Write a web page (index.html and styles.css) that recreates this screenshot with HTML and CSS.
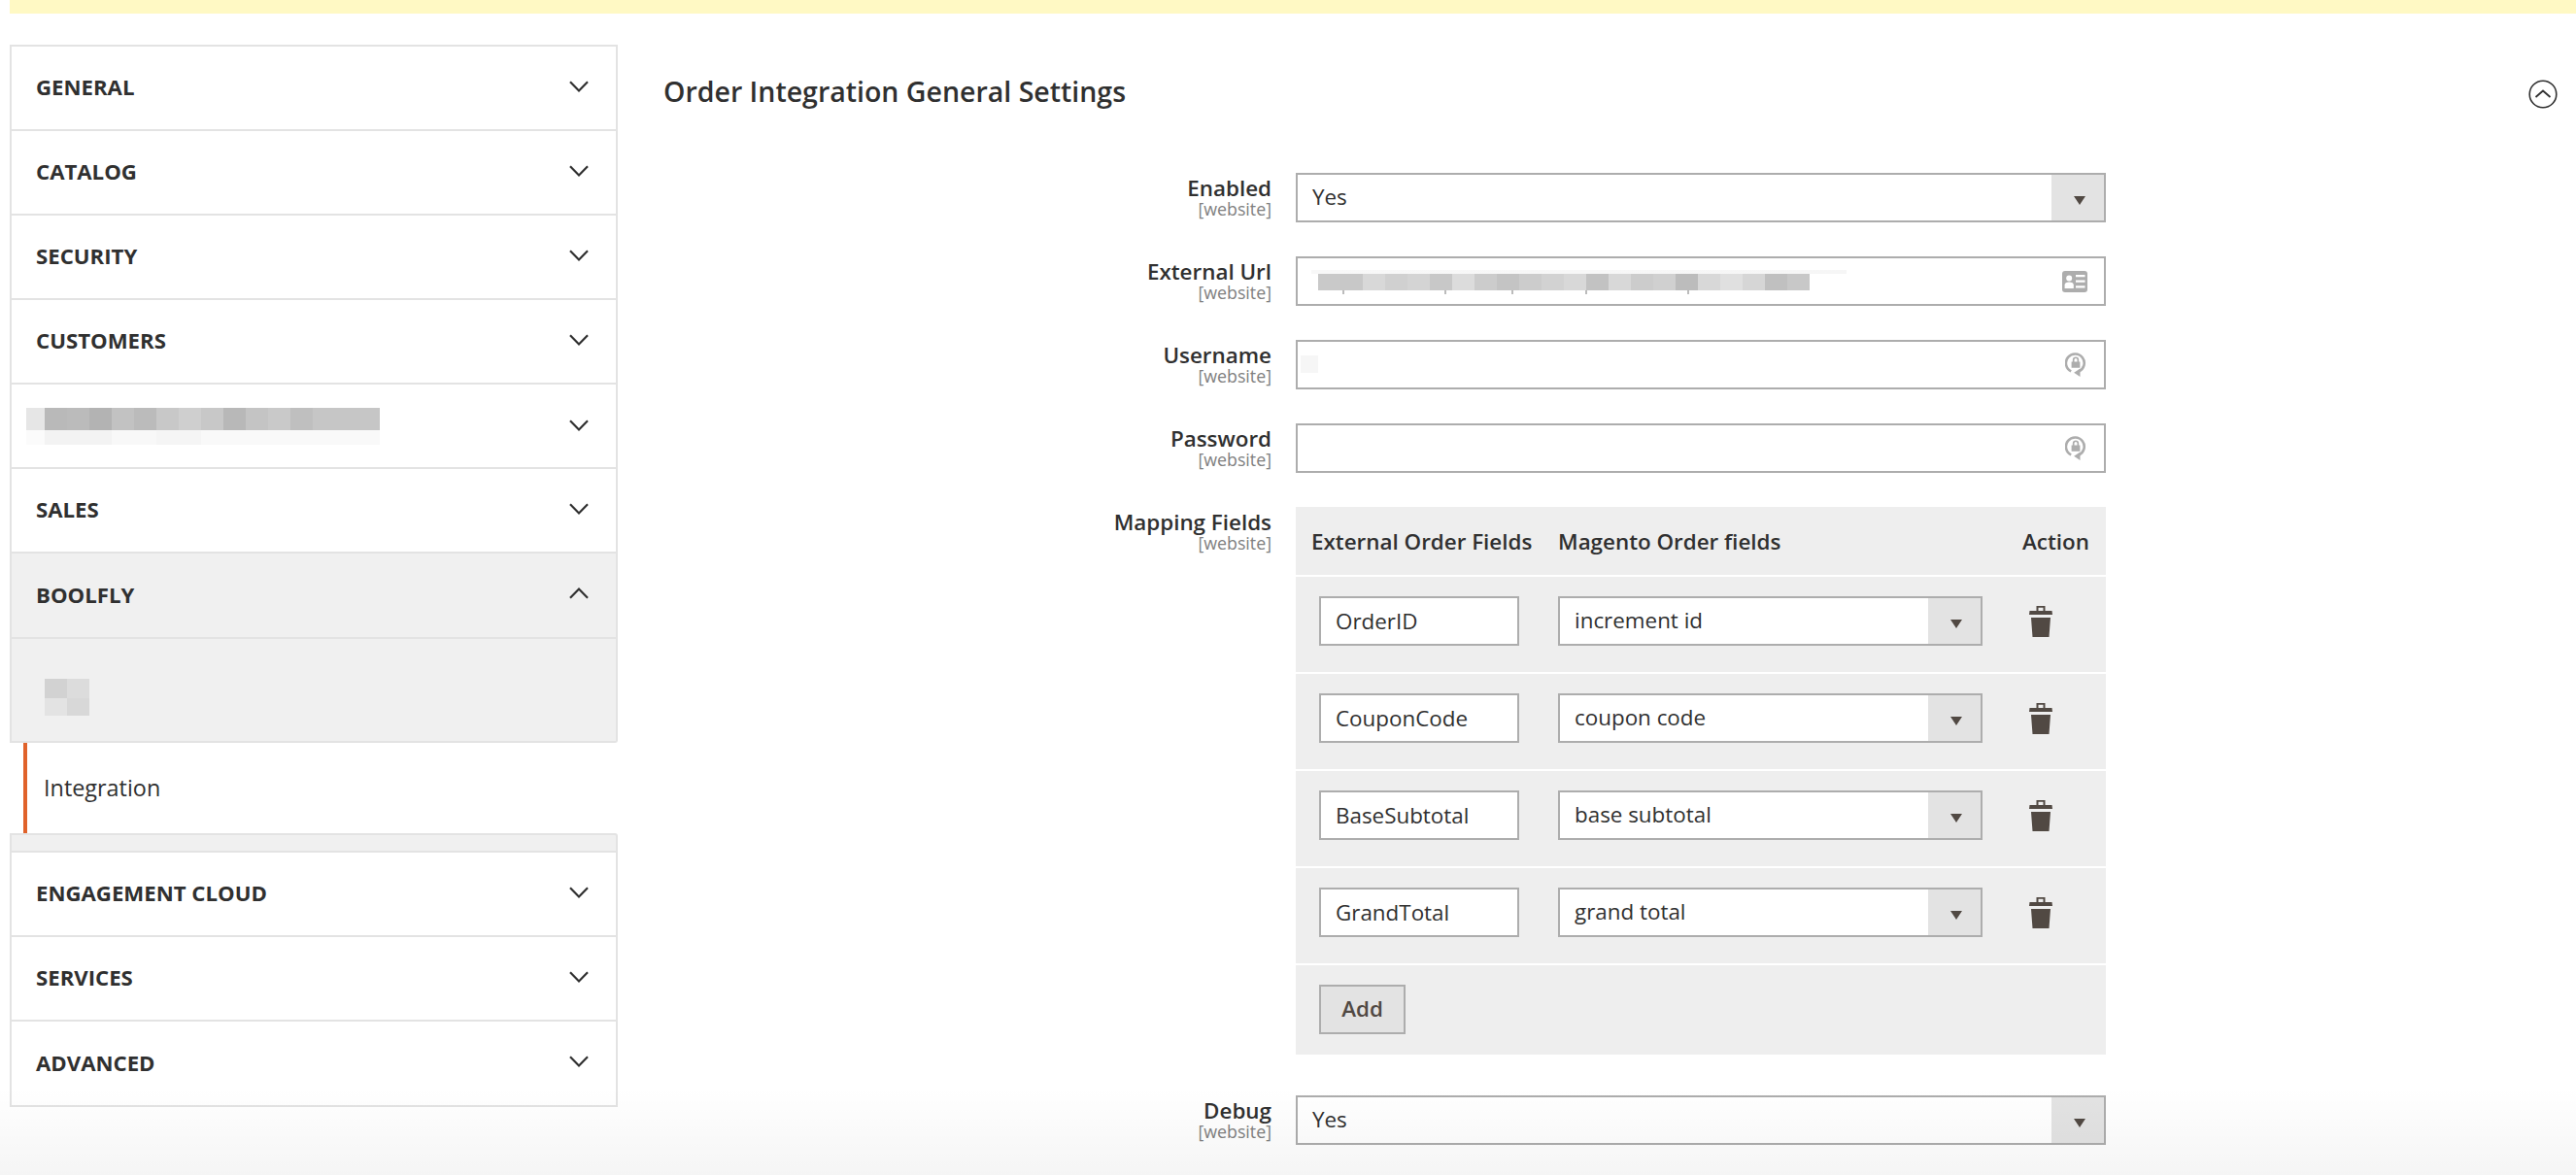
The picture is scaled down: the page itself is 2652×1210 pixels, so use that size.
FILE: index.html
```html
<!DOCTYPE html>
<html lang="en">
<head>
<meta charset="utf-8">
<title>Order Integration General Settings</title>
<link rel="stylesheet" href="styles.css">
</head>
<body>
<svg class="defs" width="0" height="0" aria-hidden="true">
  <symbol id="chev-down" viewBox="0 0 20 12"><path d="M1 1.2 10 10.4 19 1.2" fill="none" stroke="#303030" stroke-width="2.2"/></symbol>
  <symbol id="chev-up" viewBox="0 0 20 12"><path d="M1 10.8 10 1.6 19 10.8" fill="none" stroke="#303030" stroke-width="2.2"/></symbol>
  <symbol id="trash" viewBox="0 0 24 32"><path fill="#514943" fill-rule="evenodd" d="M7.5 0h9v5h7l.5 4H0l.5-4h7zM9.5 1.8V5h5V1.8zM2 12h20l-1.5 20h-17z"/></symbol>
  <symbol id="lock" viewBox="0 0 22 26">
    <path d="M14 19.6A9.4 9.4 0 1 0 6.2 19.4" fill="none" stroke="#adadad" stroke-width="2.6"/>
    <path fill="#adadad" d="M15.5 16.4v8.6l-6.4-4.3z"/>
    <path fill="#adadad" fill-rule="evenodd" d="M6.6 9.4h1.2V7.6a3.2 3.2 0 0 1 6.4 0v1.8h1.2v6.4H6.6zM9.5 9.4h3V7.6a1.5 1.5 0 0 0-3 0z"/>
  </symbol>
  <symbol id="card" viewBox="0 0 26 22">
    <rect width="26" height="22" rx="3" fill="#adadad"/>
    <circle cx="7.2" cy="7.4" r="3" fill="#fff"/>
    <path fill="#fff" d="M2.6 18v-3.4c0-2 1.6-3 4.6-3s4.6 1 4.6 3V18z"/>
    <path fill="#fff" d="M14 4h9.5v2.2H14zM14 9.6h9.5v2.2H14zM14 15.2h9.5v2.2H14z"/>
  </symbol>
</svg>

<div class="notice"></div>

<div class="page">
  <nav class="sidebar">
    <div class="sec"><span class="sec-title">GENERAL</span><svg class="chev"><use href="#chev-down"/></svg></div>
    <div class="sec"><span class="sec-title">CATALOG</span><svg class="chev"><use href="#chev-down"/></svg></div>
    <div class="sec"><span class="sec-title">SECURITY</span><svg class="chev"><use href="#chev-down"/></svg></div>
    <div class="sec"><span class="sec-title">CUSTOMERS</span><svg class="chev"><use href="#chev-down"/></svg></div>
    <div class="sec sec-redacted"><div class="blur-name"></div><svg class="chev"><use href="#chev-down"/></svg></div>
    <div class="sec"><span class="sec-title">SALES</span><svg class="chev"><use href="#chev-down"/></svg></div>
    <div class="sec sec-open"><span class="sec-title">BOOLFLY</span><svg class="chev"><use href="#chev-up"/></svg></div>
    <div class="sub-gray"><div class="blur-sub"></div></div>
    <div class="sub-active">Integration</div>
    <div class="sub-tail"></div>
    <div class="sec"><span class="sec-title">ENGAGEMENT CLOUD</span><svg class="chev"><use href="#chev-down"/></svg></div>
    <div class="sec"><span class="sec-title">SERVICES</span><svg class="chev"><use href="#chev-down"/></svg></div>
    <div class="sec sec-last"><span class="sec-title">ADVANCED</span><svg class="chev"><use href="#chev-down"/></svg></div>
  </nav>

  <main class="content">
    <header class="head">
      <h1 class="title">Order Integration General Settings</h1>
      <svg class="collapse" viewBox="0 0 30 30"><circle cx="15" cy="15" r="13.8" fill="none" stroke="#303030" stroke-width="1.6"/><path d="M7.5 18 15 11.5 22.5 18" fill="none" stroke="#303030" stroke-width="1.8"/></svg>
    </header>

    <div class="form">
      <div class="row">
        <div class="label"><div class="label-name">Enabled</div><div class="label-scope">[website]</div></div>
        <div class="field select"><span class="val">Yes</span><span class="arrow-box"><span class="arrow"></span></span></div>
      </div>
      <div class="row">
        <div class="label"><div class="label-name">External Url</div><div class="label-scope">[website]</div></div>
        <div class="field input"><div class="blur-url"></div><svg class="icon-card"><use href="#card"/></svg></div>
      </div>
      <div class="row">
        <div class="label"><div class="label-name">Username</div><div class="label-scope">[website]</div></div>
        <div class="field input"><div class="blur-user"></div><svg class="icon-lock"><use href="#lock"/></svg></div>
      </div>
      <div class="row">
        <div class="label"><div class="label-name">Password</div><div class="label-scope">[website]</div></div>
        <div class="field input"><svg class="icon-lock"><use href="#lock"/></svg></div>
      </div>
      <div class="row row-map">
        <div class="label"><div class="label-name">Mapping Fields</div><div class="label-scope">[website]</div></div>
        <div class="map">
          <div class="map-head"><span class="mh-a">External Order Fields</span><span class="mh-b">Magento Order fields</span><span class="mh-c">Action</span></div>
          <div class="map-row">
            <div class="mini-input">OrderID</div>
            <div class="field select mini-select"><span class="val">increment id</span><span class="arrow-box"><span class="arrow"></span></span></div>
            <svg class="trash"><use href="#trash"/></svg>
          </div>
          <div class="map-row">
            <div class="mini-input">CouponCode</div>
            <div class="field select mini-select"><span class="val">coupon code</span><span class="arrow-box"><span class="arrow"></span></span></div>
            <svg class="trash"><use href="#trash"/></svg>
          </div>
          <div class="map-row">
            <div class="mini-input">BaseSubtotal</div>
            <div class="field select mini-select"><span class="val">base subtotal</span><span class="arrow-box"><span class="arrow"></span></span></div>
            <svg class="trash"><use href="#trash"/></svg>
          </div>
          <div class="map-row">
            <div class="mini-input">GrandTotal</div>
            <div class="field select mini-select"><span class="val">grand total</span><span class="arrow-box"><span class="arrow"></span></span></div>
            <svg class="trash"><use href="#trash"/></svg>
          </div>
          <div class="map-foot"><button class="add" type="button">Add</button></div>
        </div>
      </div>
      <div class="row row-debug">
        <div class="label"><div class="label-name">Debug</div><div class="label-scope">[website]</div></div>
        <div class="field select"><span class="val">Yes</span><span class="arrow-box"><span class="arrow"></span></span></div>
      </div>
    </div>
  </main>
</div>
<div class="fade"></div>
</body>
</html>
```
FILE: styles.css
```css
* { box-sizing: border-box; }
html, body { margin: 0; height: 1210px; overflow: hidden; }
body {
  position: relative;
  background: #fff;
  color: #303030;
  font-family: "Open Sans", "Liberation Sans", sans-serif;
  font-size: 22.4px;
  padding-left: 10px;
}
.defs { position: absolute; }

.notice { height: 14px; background: #fff9c4; }

.page { display: flex; align-items: flex-start; }

/* sidebar */
.sidebar { width: 626px; margin-top: 32px; flex: none; }
.sec {
  height: 87px;
  display: flex;
  align-items: center;
  justify-content: space-between;
  padding: 0 28px 2px 25px;
  border: 2px solid #e3e3e3;
  border-top: 0;
  background: #fff;
}
.sidebar > .sec:first-child { height: 89px; border-top: 2px solid #e3e3e3; }
.sec-title { font-weight: 700; font-size: 22.2px; color: #303030; }
.chev { width: 20px; height: 12px; margin-top: -2px; flex: none; }
.sec-open { height: 88px; background: #f0f0f0; }
.sec-last { height: 88px; }
.sec-redacted { padding-left: 15px; padding-bottom: 0; }
.blur-name {
  width: 364px;
  height: 38px;
  background:
    linear-gradient(90deg, #e6e6e6 0 19px, #b9b9b9 19px 42px, #bbb 42px 65px, #b3b3b3 65px 88px, #c2c2c2 88px 111px, #bbb 111px 134px, #c8c8c8 134px 157px, #cfcfcf 157px 180px, #c8c8c8 180px 203px, #b8b8b8 203px 226px, #c4c4c4 226px 249px, #c9c9c9 249px 272px, #bfbfbf 272px 295px, #c6c6c6 295px 364px) top / 100% 23px no-repeat,
    linear-gradient(90deg, #fbfbfb 0 19px, #f3f3f3 19px 88px, #f8f8f8 88px 134px, #f5f5f5 134px 180px, #f9f9f9 180px 364px) bottom / 100% 15px no-repeat;
}

.sub-gray {
  height: 107px;
  background: #f0f0f0;
  border: 2px solid #e3e3e3;
  border-top: 0;
  padding: 41px 0 0 34px;
  border-radius: 0 0 3px 0;
}
.blur-sub {
  width: 46px;
  height: 38px;
  background:
    linear-gradient(90deg, #d2d2d2 0 23px, #dcdcdc 23px) top / 100% 20px no-repeat,
    linear-gradient(90deg, #e3e3e3 0 23px, #d8d8d8 23px) bottom / 100% 18px no-repeat;
}
.sub-active {
  height: 93px;
  margin-left: 14px;
  border-left: 4px solid #e0622a;
  background: #fff;
  display: flex;
  align-items: center;
  padding: 0 0 1px 17px;
  font-size: 23.4px;
  color: #303030;
}
.sub-tail {
  height: 20px;
  background: #f0f0f0;
  border: 2px solid #e3e3e3;
  border-radius: 0 3px 0 0;
}

/* content */
.content { width: 1969px; margin-left: 47px; flex: none; }
.head { position: relative; height: 164px; padding-top: 60px; }
.title { margin: 0; font-size: 28.5px; font-weight: 600; line-height: 40px; color: #303030; }
.collapse { position: absolute; left: 1920px; top: 68px; width: 30px; height: 30px; }

.row { display: grid; grid-template-columns: 626px 834px; column-gap: 25px; margin-bottom: 35px; }
.row-debug { margin-top: 42px; margin-bottom: 0; }
.row-map { margin-bottom: 0; }
.label { text-align: right; padding-top: 2px; }
.label-name { font-size: 22.4px; font-weight: 600; line-height: 28px; color: #303030; }
.label-scope { font-size: 17.8px; line-height: 15px; color: #808080; }

.field {
  position: relative;
  height: 51px;
  border: 2px solid #adadad;
  background: #fff;
  display: flex;
  align-items: center;
  padding-left: 15px;
}
.val { line-height: 1; }
.select { padding-right: 56px; }
.arrow-box {
  position: absolute;
  right: 0;
  top: 0;
  bottom: 0;
  width: 54px;
  background: #e3e3e3;
  display: flex;
  align-items: center;
  justify-content: center;
}
.arrow {
  width: 0;
  height: 0;
  border-left: 6.5px solid transparent;
  border-right: 6.5px solid transparent;
  border-top: 9px solid #514943;
  margin: 5px 0 0 4px;
}
.input { justify-content: flex-start; }
.icon-card { position: absolute; right: 17px; top: 13px; width: 26px; height: 22px; }
.icon-lock { position: absolute; right: 18px; top: 11px; width: 22px; height: 26px; }
.blur-url {
  position: absolute;
  left: 14px;
  top: 12px;
  width: 551px;
  height: 25px;
  background:
    linear-gradient(90deg, transparent 0 32px, #bbb 32px 34px, transparent 34px 137px, #bbb 137px 139px, transparent 139px 206px, #bbb 206px 208px, transparent 208px 282px, #bbb 282px 284px, transparent 284px 387px, #bbb 387px 389px, transparent 389px) 0 21px / 100% 4px no-repeat,
    linear-gradient(90deg, #fff 0 7px, #c9c9c9 7px 30px, #c8c8c8 30px 53px, #d8d8d8 53px 76px, #d0d0d0 76px 99px, #d4d4d4 99px 122px, #c8c8c8 122px 145px, #dcdcdc 145px 168px, #cccccc 168px 191px, #c4c4c4 191px 214px, #cccccc 214px 237px, #d2d2d2 237px 260px, #d8d8d8 260px 283px, #c2c2c2 283px 306px, #d8d8d8 306px 329px, #cccccc 329px 352px, #d0d0d0 352px 375px, #bcbcbc 375px 398px, #d8d8d8 398px 421px, #e0e0e0 421px 444px, #d6d6d6 444px 467px, #c0c0c0 467px 490px, #c8c8c8 490px 513px, transparent 513px) 0 4px / 100% 17px no-repeat,
    linear-gradient(90deg, #f8f8f8, #f6f6f6) top / 100% 4px no-repeat;
}
.blur-user { position: absolute; left: 3px; top: 14px; width: 18px; height: 18px; background: #f6f6f6; }

.map { background: #fff; }
.map-head {
  height: 70px;
  background: #eee;
  display: flex;
  align-items: center;
  font-weight: 600;
  margin-bottom: 2px;
  padding: 0 0 0 16px;
}
.mh-a { width: 254px; flex: none; white-space: nowrap; }
.mh-b { width: 478px; flex: none; white-space: nowrap; }
.map-row {
  height: 98px;
  background: #eee;
  margin-bottom: 2px;
  padding: 20px 0 0 24px;
  display: flex;
  align-items: flex-start;
}
.mini-input {
  width: 206px;
  height: 51px;
  border: 2px solid #adadad;
  background: #fff;
  padding-left: 15px;
  display: flex;
  align-items: center;
  flex: none;
}
.mini-select { width: 437px; margin-left: 40px; flex: none; }
.trash { width: 24px; height: 32px; margin: 10px 0 0 48px; flex: none; }
.map-foot { height: 92px; background: #eee; padding: 20px 0 0 24px; }
.add {
  display: block;
  width: 89px;
  height: 51px;
  padding: 0 0 2px;
  border: 2px solid #adadad;
  background: #e3e3e3;
  color: #514943;
  font: 600 22.4px "Open Sans", "Liberation Sans", sans-serif;
}

.fade {
  position: absolute;
  left: 0;
  right: 0;
  bottom: 0;
  height: 90px;
  background: linear-gradient(180deg, rgba(0,0,0,0), rgba(0,0,0,.04));
  pointer-events: none;
}
```
